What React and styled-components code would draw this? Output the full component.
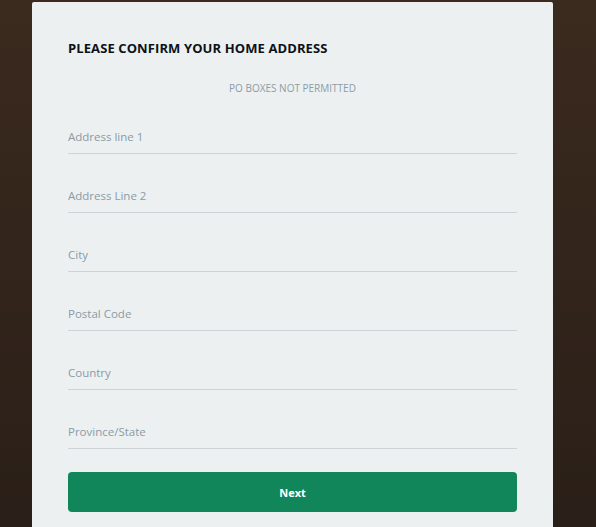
import React from 'react'
import styled, { createGlobalStyle } from "styled-components";

const GlobalStyle = createGlobalStyle`
  html, body {
    margin: 0;
    padding: 0;
    height: 100%;
  }
  body {
    font-family: "Open Sans", "Liberation Sans", sans-serif;
    background: linear-gradient(to bottom, #3b2a1e 0%, #2a1f18 100%);
    overflow: hidden;
  }
`;

const fields = [
  "Address line 1",
  "Address Line 2",
  "City",
  "Postal Code",
  "Country",
  "Province/State",
];

const App = () => {
  return (
    <>
      <GlobalStyle />
      <Page>
        <Card>
          <Title>PLEASE CONFIRM YOUR HOME ADDRESS</Title>
          <Note>PO BOXES NOT PERMITTED</Note>
          <Form onSubmit={(e) => e.preventDefault()}>
            {fields.map((f) => (
              <Field key={f} type="text" placeholder={f} />
            ))}
            <NextButton type="submit">Next</NextButton>
          </Form>
        </Card>
      </Page>
    </>
  )
}
export default App

const Page = styled.div`
  height: 527px;
  padding-top: 2px;
  box-sizing: border-box;
  display: flex;
  justify-content: flex-start;
  padding-left: 32px;
`;

const Card = styled.div`
  width: 521px;
  height: 540px;
  box-sizing: border-box;
  background-color: #ecf0f1;
  border-radius: 2px 2px 0 0;
  padding: 37px 36px 0 36px;
`;

const Title = styled.h2`
  margin: 0;
  font-size: 13px;
  line-height: 18px;
  font-weight: 700;
  color: #0e1216;
  letter-spacing: 0.1px;
`;

const Note = styled.p`
  margin: 25px 0 0 0;
  font-size: 10px;
  line-height: 13px;
  text-align: center;
  color: #8c9ca6;
`;

const Form = styled.form`
  display: flex;
  flex-direction: column;
`;

const Field = styled.input`
  margin-top: 34px;
  height: 25px;
  box-sizing: border-box;
  padding: 0 0 9px 0;
  border: none;
  border-bottom: 1px solid #cdd3d6;
  background: transparent;
  font-family: "Open Sans", "Liberation Sans", sans-serif;
  font-size: 11.5px;
  line-height: 15px;
  color: #34495e;
  outline: none;

  &::placeholder {
    color: #8a9ba5;
  }
`;

const NextButton = styled.button`
  margin-top: 23px;
  height: 40px;
  border: none;
  border-radius: 4px;
  background-color: #10865a;
  color: #ffffff;
  font-family: "Open Sans", "Liberation Sans", sans-serif;
  font-size: 11px;
  font-weight: 700;
  cursor: pointer;
`;
